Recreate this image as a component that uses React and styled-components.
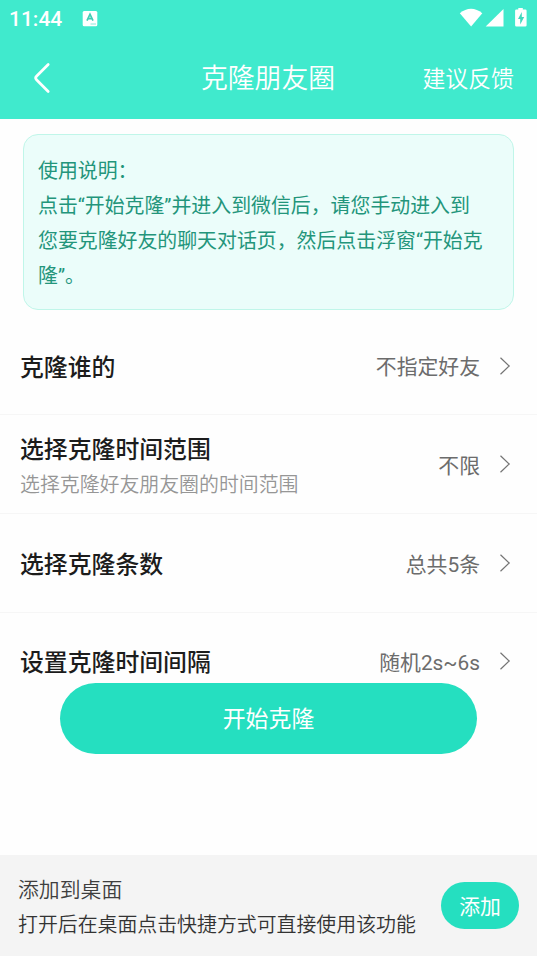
import React from "react";
import styled, { createGlobalStyle } from "styled-components";

const GlobalStyle = createGlobalStyle`
  * { box-sizing: border-box; }
  body {
    margin: 0;
    background: #fefefe;
    font-family: Roboto, "Noto Sans CJK SC", sans-serif;
  }
  button { font: inherit; border: 0; padding: 0; background: none; color: inherit; }
`;

const Screen = styled.div`
  display: flex;
  flex-direction: column;
  width: 537px;
  height: 956px;
  overflow: hidden;
  background: #fefefe;
`;

const Header = styled.header`
  flex: none;
  height: 119px;
  background: #40eacd;
  color: #fff;
`;

const StatusBar = styled.div`
  display: flex;
  align-items: center;
  height: 37px;
  padding: 0 9px 0 9px;
`;

const Clock = styled.span`
  width: 73px;
  padding-top: 1px;
  font-size: 21px;
  font-weight: 500;
  line-height: 36px;
`;

const StatusIcons = styled.div`
  display: flex;
  margin-left: auto;
`;

const NavBar = styled.div`
  display: grid;
  grid-template-columns: 1fr auto 1fr;
  align-items: center;
  height: 82px;
  padding: 0 23px 0 31px;
`;

const BackButton = styled.button`
  display: flex;
  justify-self: start;
`;

const Title = styled.h1`
  margin: 0 0 0 -9px;
  padding-top: 2px;
  font-size: 26.8px;
  font-weight: 350;
  line-height: 40px;
`;

const Feedback = styled.button`
  justify-self: end;
  padding-top: 4px;
  font-size: 22.9px;
  font-weight: 350;
  line-height: 34px;
`;

const Notice = styled.section`
  flex: none;
  height: 176px;
  margin: 15px 23px 0;
  padding: 19px 26px 0 14px;
  border: 1px solid #c0f6e9;
  border-radius: 15px;
  background: #ebfdfa;
  color: #23957b;
  font-size: 19.9px;
  font-weight: 400;
  line-height: 35px;
`;

const NoticeLine = styled.p`
  margin: 0;
`;

const Settings = styled.ul`
  flex: none;
  height: 373px;
  margin: 0;
  padding: 7px 0 0;
  overflow: hidden;
  list-style: none;
`;

const Row = styled.li`
  display: flex;
  align-items: center;
  height: ${(p) => (p.$tall ? "99px" : "98.4px")};
  padding: 0 26px 0 20px;
  border-bottom: 1px solid #f6f6f6;
`;

const RowText = styled.div`
  flex: 1;
  padding-top: ${(p) => (p.$withHint ? "7px" : "5px")};
`;

const RowTitle = styled.div`
  color: #1c1c1c;
  font-size: 23.85px;
  font-weight: 500;
  line-height: 35px;
`;

const RowHint = styled.div`
  color: #969696;
  font-size: 19.9px;
  font-weight: 350;
  line-height: 35px;
`;

const RowValue = styled.span`
  margin-right: 19px;
  padding-top: 3px;
  color: #6c6c6c;
  font-size: 20.85px;
  line-height: 32px;
`;

const StartButton = styled.button`
  flex: none;
  align-self: center;
  width: 417px;
  height: 71px;
  padding-bottom: 3px;
  border-radius: 36px;
  background: #25dfc0;
  color: #fff;
  font-size: 22.9px;
`;

const Footer = styled.footer`
  display: flex;
  flex: none;
  align-items: center;
  justify-content: space-between;
  height: 101px;
  margin-top: auto;
  padding: 0 18px;
  background: #f4f4f4;
`;

const FooterText = styled.div`
  padding-top: 4px;
  font-weight: 350;
  line-height: 35px;
`;

const FooterTitle = styled.div`
  color: #3e3e3e;
  font-size: 20.85px;
`;

const FooterHint = styled.div`
  color: #333;
  font-size: 19.9px;
`;

const AddButton = styled.button`
  width: 78px;
  height: 47px;
  padding-bottom: 1px;
  border-radius: 24px;
  background: #25dfc0;
  color: #fff;
  font-size: 20.85px;
`;

const KeyboardIcon = () => (
  <svg width="16" height="17" viewBox="0 0 16 17">
    <rect x="0.7" y="1" width="14.6" height="15.3" rx="1.5" fill="#fff" />
    <path d="M5 10.7 8 4.2l3 6.500M6.200 8.700h3.600" fill="none" stroke="#40cdb5" strokeWidth="1.7" />
    <path d="M8.500 14h5.500" stroke="#8ce9da" strokeWidth="1" />
  </svg>
);

const SignalIcons = () => (
  <svg width="70" height="22" viewBox="0 0 70 22" fill="#fff">
    <path d="M1.800 5.300C8.800-.8 17.300-.8 24.300 5.300L13.100 18.500z" />
    <path d="M45.500 1V18.500H27.700z" />
    <path d="M60.300-.5h4.500v2h2.500q1.300 0 1.300 1.300v14.400q0 1.300-1.300 1.300h-8.900q-1.300 0-1.300-1.300V2.800q0-1.300 1.300-1.300h1.900z" />
    <path d="M63.800 4 60 11h2.200V16.500l4-7.500h-2.400z" fill="#40d9be" />
  </svg>
);

const BackIcon = () => (
  <svg width="22" height="34" viewBox="0 0 22 34" fill="none">
    <path d="M17.200 3.500 5.500 15.300q-1.700 1.700 0 3.400L17.200 30.500" stroke="#fff" strokeWidth="2.700" strokeLinecap="round" />
  </svg>
);

const ChevronIcon = () => (
  <svg width="12" height="20" viewBox="0 0 12 20" fill="none">
    <path d="M1.500 1.700 10.200 10 1.500 18.300" stroke="#747474" strokeWidth="1.200" />
  </svg>
);

const rows = [
  { title: "克隆谁的", value: "不指定好友" },
  { title: "选择克隆时间范围", hint: "选择克隆好友朋友圈的时间范围", value: "不限" },
  { title: "选择克隆条数", value: "总共5条" },
  { title: "设置克隆时间间隔", value: "随机2s~6s" },
];

export default function App() {
  return (
    <Screen lang="zh-CN">
      <GlobalStyle />
      <Header>
        <StatusBar>
          <Clock>11:44</Clock>
          <KeyboardIcon />
          <StatusIcons><SignalIcons /></StatusIcons>
        </StatusBar>
        <NavBar>
          <BackButton aria-label="返回"><BackIcon /></BackButton>
          <Title>克隆朋友圈</Title>
          <Feedback>建议反馈</Feedback>
        </NavBar>
      </Header>
      <Notice>
        <NoticeLine>使用说明：</NoticeLine>
        <NoticeLine>点击“开始克隆”并进入到微信后，请您手动进入到您要克隆好友的聊天对话页，然后点击浮窗“开始克隆”。</NoticeLine>
      </Notice>
      <Settings>
        {rows.map((row) => (
          <Row key={row.title} $tall={Boolean(row.hint)}>
            <RowText $withHint={Boolean(row.hint)}>
              <RowTitle>{row.title}</RowTitle>
              {row.hint && <RowHint>{row.hint}</RowHint>}
            </RowText>
            <RowValue>{row.value}</RowValue>
            <ChevronIcon />
          </Row>
        ))}
      </Settings>
      <StartButton>开始克隆</StartButton>
      <Footer>
        <FooterText>
          <FooterTitle>添加到桌面</FooterTitle>
          <FooterHint>打开后在桌面点击快捷方式可直接使用该功能</FooterHint>
        </FooterText>
        <AddButton>添加</AddButton>
      </Footer>
    </Screen>
  );
}
